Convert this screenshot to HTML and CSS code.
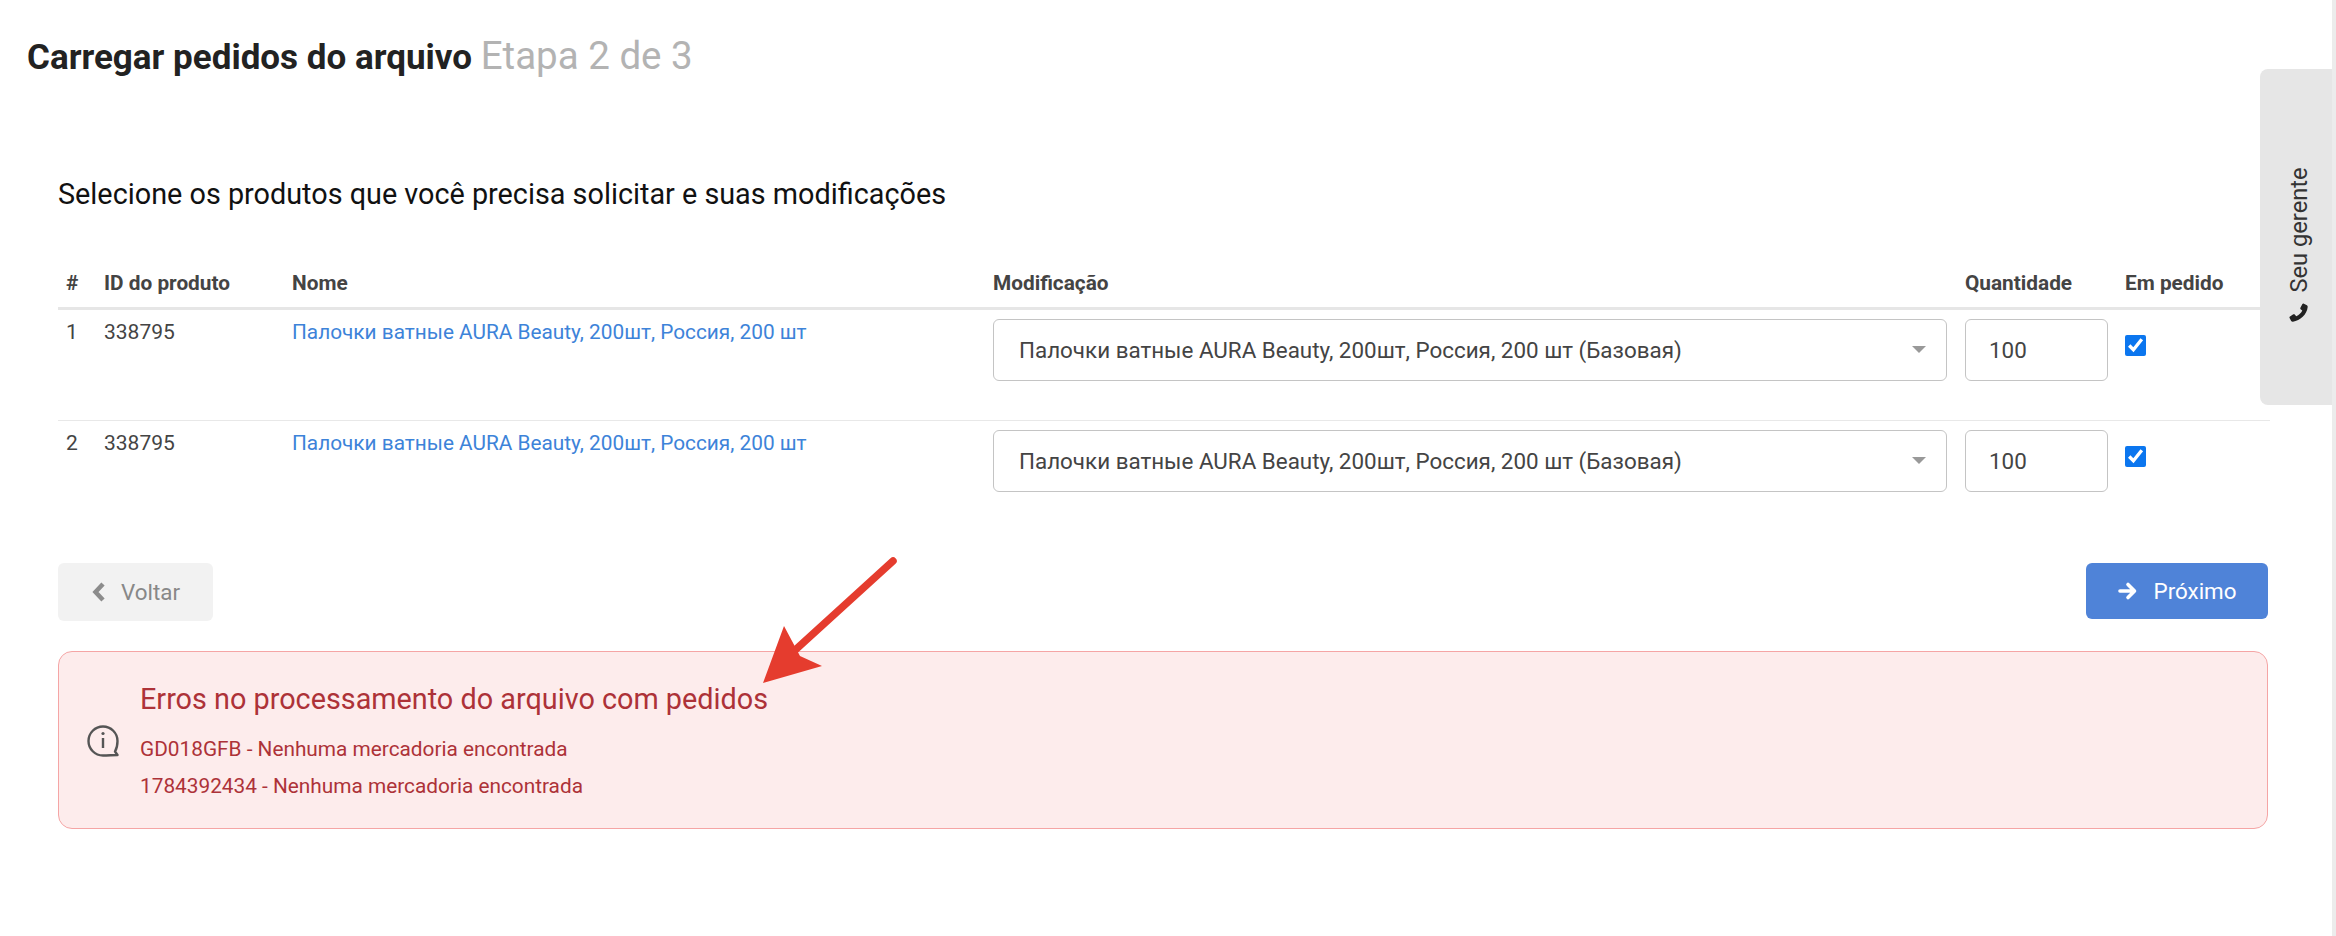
FILE: index.html
```html
<!DOCTYPE html>
<html lang="pt">
<head>
    <meta charset="UTF-8">
    <meta name="viewport" content="width=device-width, initial-scale=1.0">
    <title>Carregar pedidos do arquivo</title>
    <link rel="stylesheet" href="styles.css">
</head>
<body>
    <h1 class="page-title">Carregar pedidos do arquivo <span class="page-step">Etapa 2 de 3</span></h1>

    <div class="content">
        <h2 class="subtitle">Selecione os produtos que você precisa solicitar e suas modificações</h2>

        <table class="products">
            <thead>
                <tr>
                    <th class="col-num">#</th>
                    <th class="col-id">ID do produto</th>
                    <th class="col-name">Nome</th>
                    <th class="col-mod">Modificação</th>
                    <th class="col-qty">Quantidade</th>
                    <th class="col-check">Em pedido</th>
                </tr>
            </thead>
            <tbody>
                <tr>
                    <td class="col-num">1</td>
                    <td>338795</td>
                    <td><a class="product-link" href="#">Палочки ватные AURA Beauty, 200шт, Россия, 200 шт</a></td>
                    <td>
                        <div class="select-box">
                            <span>Палочки ватные AURA Beauty, 200шт, Россия, 200 шт (Базовая)</span>
                            <i class="caret"></i>
                        </div>
                    </td>
                    <td><div class="qty-box">100</div></td>
                    <td><input class="row-check" type="checkbox" checked></td>
                </tr>
                <tr>
                    <td class="col-num">2</td>
                    <td>338795</td>
                    <td><a class="product-link" href="#">Палочки ватные AURA Beauty, 200шт, Россия, 200 шт</a></td>
                    <td>
                        <div class="select-box">
                            <span>Палочки ватные AURA Beauty, 200шт, Россия, 200 шт (Базовая)</span>
                            <i class="caret"></i>
                        </div>
                    </td>
                    <td><div class="qty-box">100</div></td>
                    <td><input class="row-check" type="checkbox" checked></td>
                </tr>
            </tbody>
        </table>

        <div class="actions">
            <button class="btn btn-back">
                <svg class="btn-icon" viewBox="0 0 14 22" width="14" height="22"><path d="M12 3 4.500 11l7.500 8" fill="none" stroke="#8c8c8c" stroke-width="4.500"/></svg>
                Voltar
            </button>
            <button class="btn btn-next">
                <svg class="btn-icon" viewBox="0 0 20 20" width="20" height="20"><path d="M2 10h14M10 3.500l6.500 6.500-6.500 6.500" fill="none" stroke="#fff" stroke-width="3.600" stroke-linejoin="round" stroke-linecap="round"/></svg>
                Próximo
            </button>
        </div>

        <div class="alert">
            <svg class="alert-icon" viewBox="0 0 32 32" width="32" height="32">
                <path d="M16 1.500C8 1.500 1.500 8 1.500 16s6.500 14.500 14.500 14.500c5 0 10-.5 14.500-.5l-2.500-3.500C29.500 24 30.500 20 30.500 16 30.500 8 24 1.500 16 1.500z" fill="none" stroke="#555" stroke-width="2.400" stroke-linejoin="round"/>
                <path d="M16 13v10" stroke="#555" stroke-width="2.400"/>
                <circle cx="16" cy="8.500" r="1.600" fill="#555"/>
            </svg>
            <div class="alert-text">
                <div class="alert-title">Erros no processamento do arquivo com pedidos</div>
                <div class="alert-line">GD018GFB - Nenhuma mercadoria encontrada</div>
                <div class="alert-line">1784392434 - Nenhuma mercadoria encontrada</div>
            </div>
        </div>
    </div>

    <div class="side-tab">
        <span class="side-label">
            <svg viewBox="0 0 20 20" width="20" height="20"><path d="M4.500 1 1.600 2.600C1 3 .8 3.600.9 4.400 1.700 11.500 8 18.400 15.500 19.100c.8.1 1.400-.2 1.800-.8l1.600-3c.3-.6.1-1.200-.4-1.500l-3.600-2c-.5-.3-1.100-.2-1.500.2l-1.400 1.700C9.800 12.800 7.300 10.300 6.400 7.600L8 6.200c.4-.4.5-1 .3-1.500L6.200 1.400C5.900.9 5.100.7 4.500 1z" fill="#222"/></svg>
            Seu gerente
        </span>
    </div>

    <svg class="annotation" viewBox="0 0 2336 936" width="2336" height="936">
        <path d="M893 561 793 652" stroke="#e53c2e" stroke-width="7.500" stroke-linecap="round"/>
        <path d="M763 683 784 626 800 656 822 666z" fill="#e53c2e"/>
    </svg>
</body>
</html>
```

FILE: styles.css
```css
* {
    box-sizing: border-box;
}
html, body {
    height: 100%;
}
body {
    font-family: Roboto, "Liberation Sans", sans-serif;
    margin: 0;
    padding: 0;
    color: #333;
    background-color: #fff;
    border-right: 4px solid #ececec;
    overflow: hidden;
    position: relative;
}
.page-title {
    font-size: 35px;
    font-weight: 700;
    line-height: 42px;
    color: #222;
    margin: 0;
    padding: 35px 0 0 27px;
}
.page-step {
    font-size: 38.500px;
    font-weight: 400;
    color: #b3b3b3;
}
.content {
    width: 2212px;
    margin: 0 0 0 58px;
    padding-top: 98px;
}
.subtitle {
    font-size: 28.800px;
    font-weight: 400;
    line-height: 34px;
    color: #111;
    margin: 0 0 59px;
}
.products {
    width: 100%;
    border-collapse: collapse;
    table-layout: fixed;
}
.products th {
    font-size: 20.800px;
    font-weight: 700;
    color: #444;
    text-align: left;
    height: 38px;
    padding: 0 0 11px;
    border-bottom: 3px solid #e6e6e6;
}
.products td {
    font-size: 21px;
    color: #444;
    vertical-align: top;
    height: 112px;
    padding: 9px 0 0;
    border-bottom: 1px solid #e8e8e8;
}
.products tr:last-child td {
    border-bottom: none;
}
.products td:nth-child(-n+3) {
    padding-top: 10px;
    line-height: 24px;
}
.col-num {
    width: 46px;
    padding-left: 8px !important;
}
.col-id {
    width: 188px;
}
.col-name {
    width: 701px;
}
.col-mod {
    width: 972px;
}
.col-qty {
    width: 160px;
}
.product-link {
    font-size: 20.800px;
    color: #3d83d9;
    text-decoration: none;
}
.select-box {
    display: flex;
    align-items: center;
    justify-content: space-between;
    width: 954px;
    height: 62px;
    padding: 0 20px 0 25px;
    font-size: 22.400px;
    color: #444;
    border: 1px solid #c4c4c4;
    border-radius: 6px;
}
.caret {
    border-left: 7px solid transparent;
    border-right: 7px solid transparent;
    border-top: 7px solid #999;
}
.qty-box {
    width: 143px;
    height: 62px;
    padding-left: 23px;
    font-size: 22.400px;
    line-height: 60px;
    color: #444;
    border: 1px solid #c4c4c4;
    border-radius: 6px;
}
.row-check {
    display: block;
    width: 21px;
    height: 21px;
    margin: 16px 0 0;
    accent-color: #0b76ef;
}
.actions {
    display: flex;
    justify-content: space-between;
    align-items: flex-start;
    width: 2210px;
    margin-top: 31px;
}
.btn {
    display: flex;
    align-items: center;
    justify-content: center;
    gap: 16px;
    font-family: inherit;
    font-size: 22.400px;
    border: none;
    border-radius: 6px;
    cursor: pointer;
}
.btn-back {
    width: 155px;
    height: 58px;
    color: #888;
    background-color: #f2f2f2;
}
.btn-next {
    width: 182px;
    height: 56px;
    color: #fff;
    background-color: #4f83d8;
}
.alert {
    display: flex;
    align-items: center;
    width: 2210px;
    height: 178px;
    margin-top: 30px;
    padding: 0 0 0 28px;
    color: #ad3238;
    background-color: #fdecec;
    border: 1px solid #f5a5a5;
    border-radius: 14px;
}
.alert-icon {
    margin: 1px 21px 0 0;
    flex: none;
}
.alert-text {
    padding-top: 7px;
}
.alert-title {
    font-size: 28.800px;
    line-height: 32px;
    margin-bottom: 16px;
}
.alert-line {
    font-size: 20.800px;
    line-height: 37px;
}
.side-tab {
    position: absolute;
    top: 69px;
    right: 0;
    width: 72px;
    height: 336px;
    padding: 15px 0 0 6px;
    background-color: #e6e6e6;
    border-radius: 8px 0 0 8px;
    display: flex;
    align-items: center;
    justify-content: center;
}
.side-label {
    display: flex;
    align-items: center;
    gap: 10px;
    font-size: 23.700px;
    color: #333;
    transform: rotate(-90deg);
    white-space: nowrap;
}
.annotation {
    position: absolute;
    top: 0;
    left: 0;
    pointer-events: none;
}
```
